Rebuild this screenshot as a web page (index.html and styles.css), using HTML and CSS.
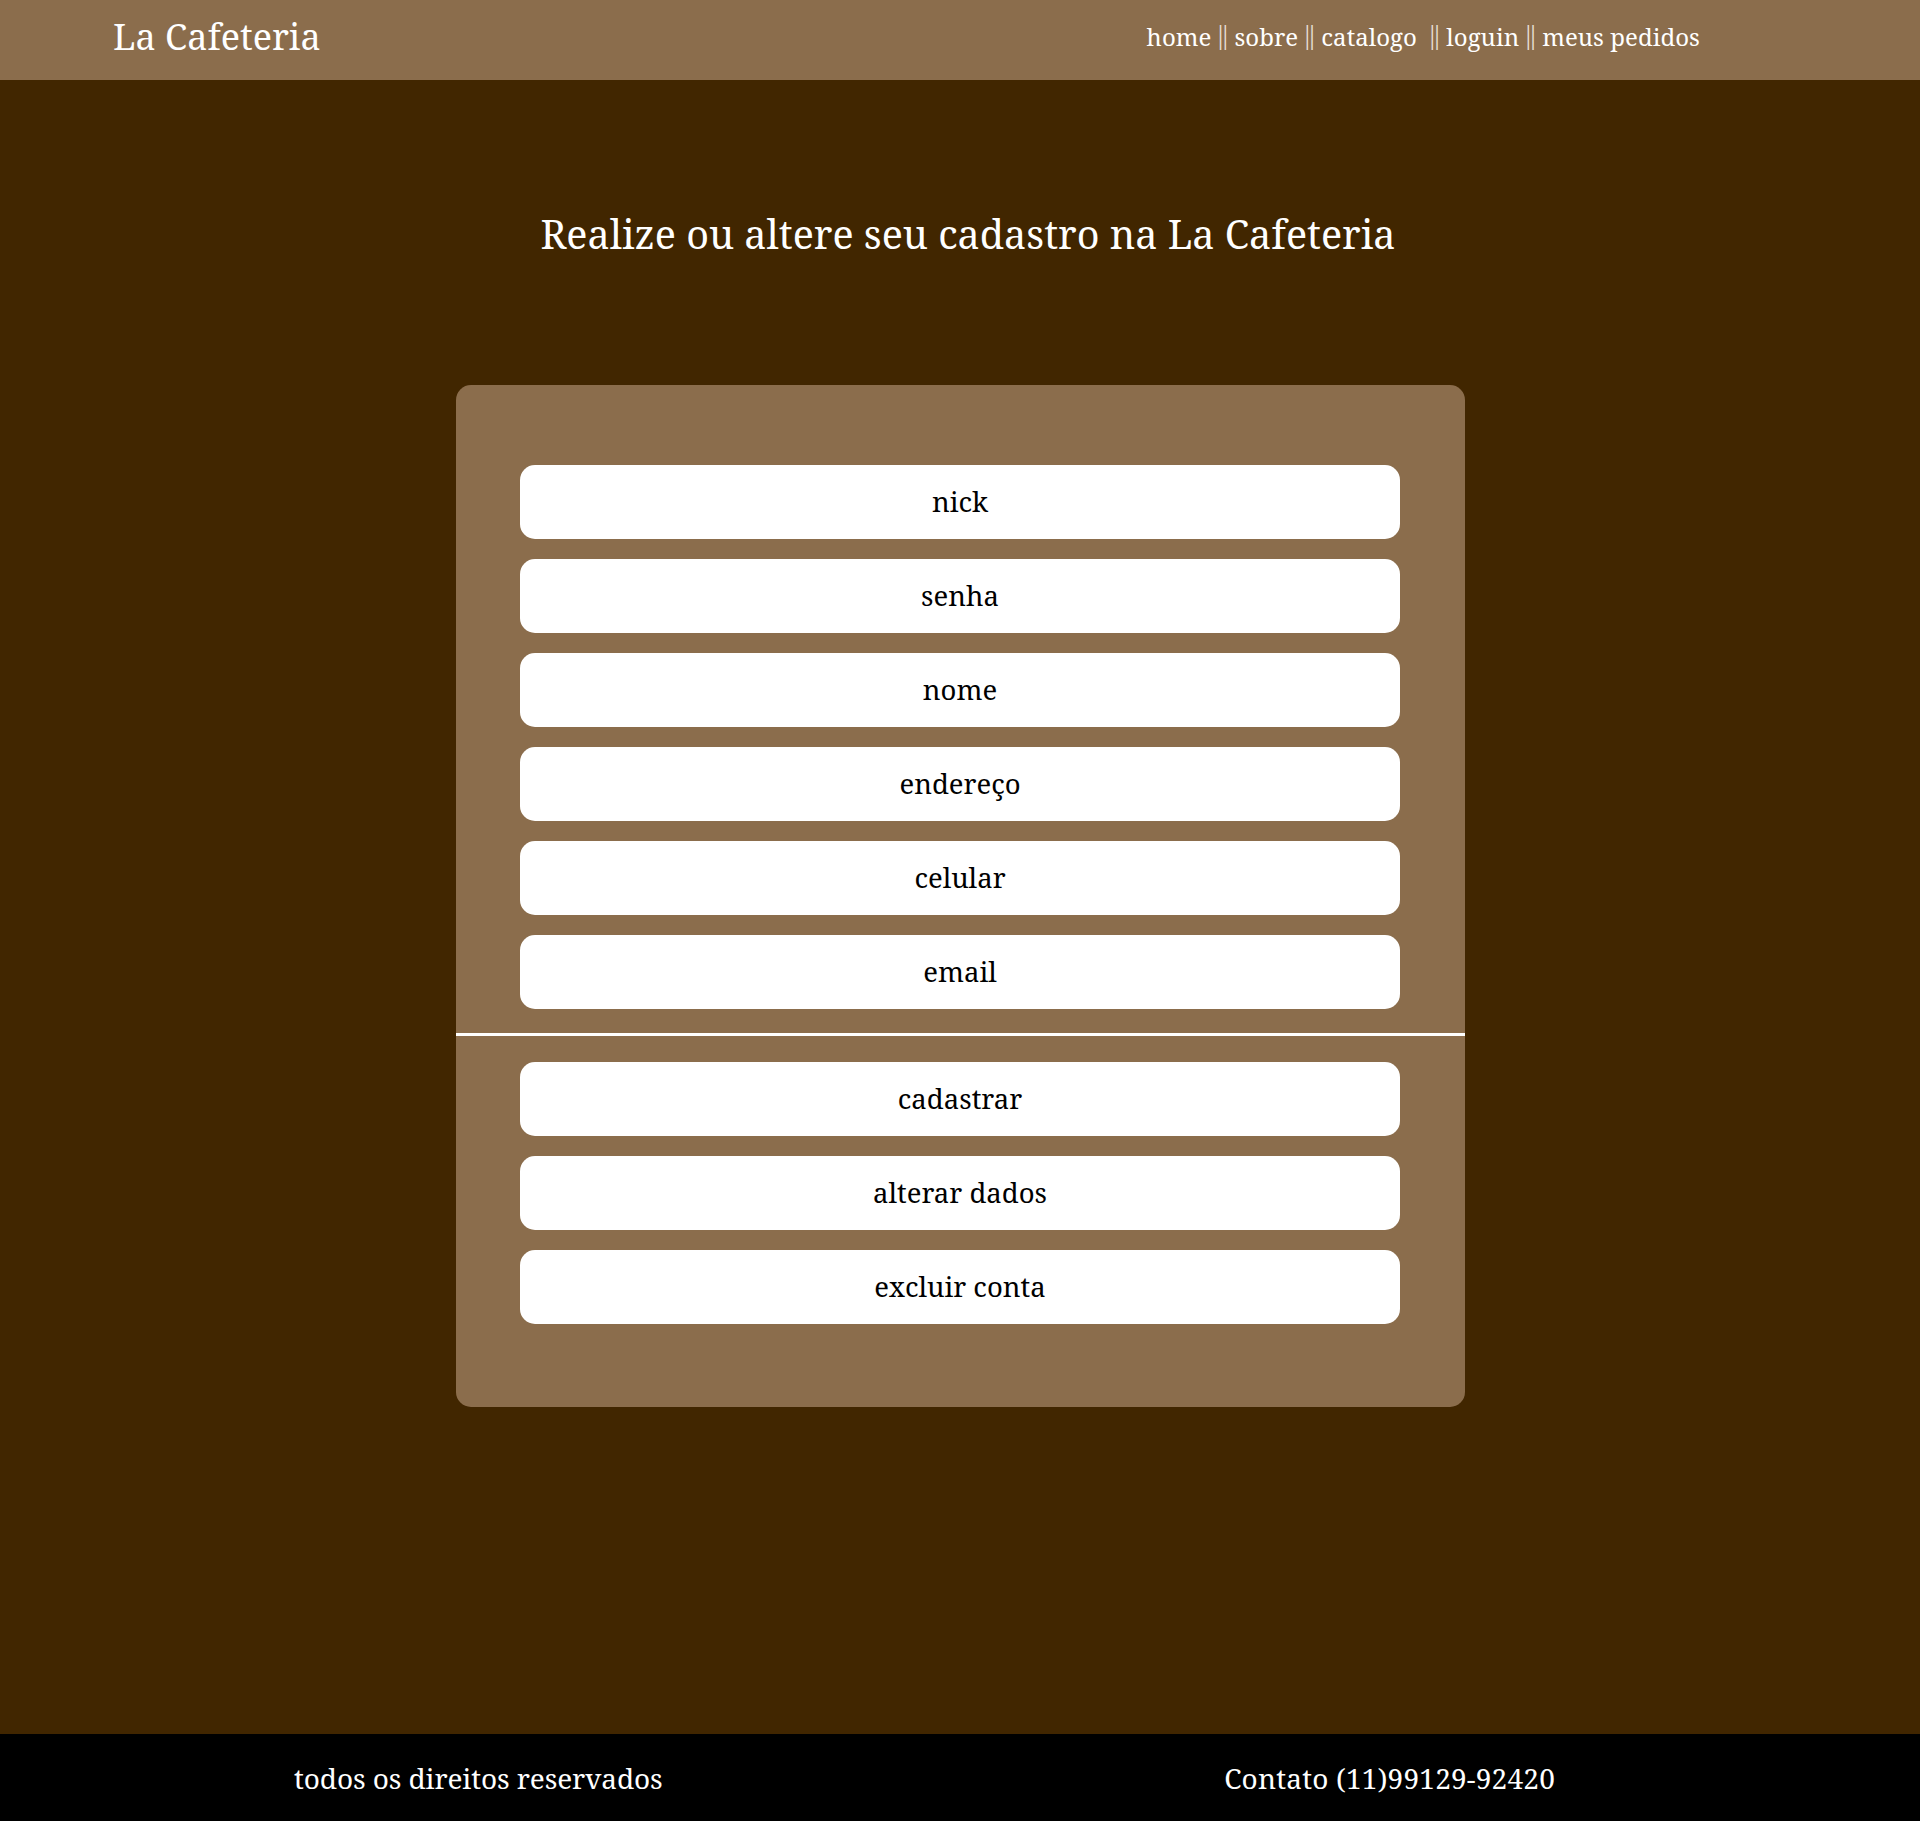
FILE: index.html
```html
<!DOCTYPE html>
<html lang="pt-BR">
<head>
<meta charset="utf-8">
<title>La Cafeteria - Cadastro</title>
<link rel="stylesheet" href="styles.css">
</head>
<body>
<header class="topo">
  <div class="logo">La Cafeteria</div>
  <nav class="menu">home <span class="sep">||</span> sobre <span class="sep">||</span> catalogo &nbsp;<span class="sep">||</span> loguin <span class="sep">||</span> meus pedidos</nav>
</header>
<main class="conteudo">
  <h1 class="titulo">Realize ou altere seu cadastro na La Cafeteria</h1>
  <form class="cartao">
    <div class="campos">
      <input class="campo" type="text" placeholder="nick">
      <input class="campo" type="password" placeholder="senha">
      <input class="campo" type="text" placeholder="nome">
      <input class="campo" type="text" placeholder="endereço">
      <input class="campo" type="text" placeholder="celular">
      <input class="campo" type="text" placeholder="email">
    </div>
    <hr class="divisor">
    <div class="campos">
      <button class="campo botao" type="button">cadastrar</button>
      <button class="campo botao" type="button">alterar dados</button>
      <button class="campo botao" type="button">excluir conta</button>
    </div>
  </form>
</main>
<footer class="rodape">
  <span class="rodape-esq">todos os direitos reservados</span>
  <span class="rodape-dir">Contato (11)99129-92420</span>
</footer>
</body>
</html>
```
FILE: styles.css
```css
* { box-sizing: border-box; }
html, body { margin: 0; padding: 0; }
body {
  font-family: "Noto Serif", "DejaVu Serif", serif;
  background: #412600;
  color: #fff;
}
.topo {
  height: 80px;
  background: #8b6d4c;
  display: flex;
  align-items: center;
  justify-content: space-between;
  padding: 0 220px 0 113px;
}
.logo {
  font-size: 36px;
  line-height: 1;
  margin-top: -6px;
}
.menu {
  font-size: 24px;
  line-height: 1;
  white-space: pre;
  margin-top: -11px;
  letter-spacing: 0.05px;
}
.sep {
  font-family: "Liberation Serif", serif;
  font-size: 28px;
  line-height: 1;
  color: #e6ddd3;
  letter-spacing: -0.8px;
  margin-right: 0.8px;
  vertical-align: 2px;
}
.conteudo {
  height: 1654px;
  display: flex;
  flex-direction: column;
  align-items: center;
}
.titulo {
  font-weight: normal;
  font-size: 39.5px;
  line-height: 1;
  margin: 135px 0 0 16px;
}
.cartao {
  margin-top: 130px;
  width: 1009px;
  background: #8b6d4c;
  border-radius: 15px;
  padding: 80px 0 83px;
}
.campos {
  display: flex;
  flex-direction: column;
  align-items: center;
  gap: 20px;
}
.campo {
  width: 880px;
  height: 74px;
  border: none;
  border-radius: 15px;
  background: #fff;
  font-family: "Noto Serif", "DejaVu Serif", serif;
  font-size: 27.5px;
  text-align: center;
  color: #000;
  outline: none;
}
.campo::placeholder { color: #000; opacity: 1; }
.botao { cursor: pointer; padding: 0; }
.divisor {
  border: none;
  height: 3px;
  background: #fff;
  margin: 24px 0 26px;
}
.rodape {
  height: 87px;
  background: #000;
  display: flex;
  align-items: center;
  font-size: 28px;
  padding-left: 294px;
}
.rodape-esq { letter-spacing: -0.1px; }
.rodape-dir { margin-left: auto; margin-right: 365px; letter-spacing: 0.2px; }
```
